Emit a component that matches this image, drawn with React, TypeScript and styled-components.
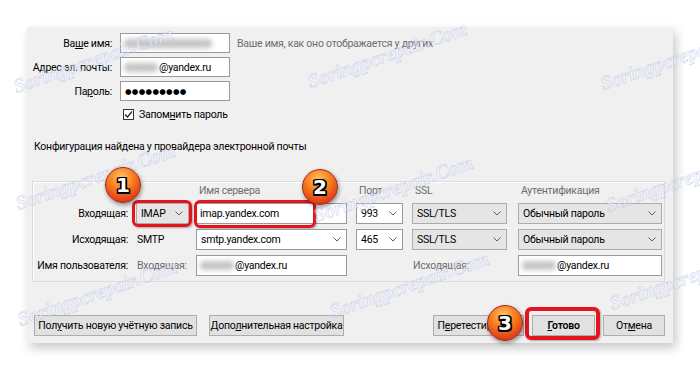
import styled, { createGlobalStyle } from 'styled-components'

const GlobalStyle = createGlobalStyle`
  html, body {
    margin: 0;
    padding: 0;
    background: #fff;
  }
  body {
    font-family: "Segoe UI", Roboto, "Noto Sans", sans-serif;
    font-size: 10.5px;
    letter-spacing: -0.25px;
    color: #000;
  }
  u {
    text-underline-offset: 1px;
  }
`

const Page = styled.div`
  position: relative;
  width: 700px;
  height: 371px;
  overflow: hidden;
  padding: 27px 27px 0 27px;
  box-sizing: border-box;
  background: #fff;
`

const Dialog = styled.div`
  width: 646px;
  height: 316px;
  background: #f0f0f0;
  box-shadow: 3px 5px 10px rgba(0, 0, 0, 0.22);
  padding: 6px 8px 7px 5px;
  box-sizing: border-box;
  display: flex;
  flex-direction: column;
`

const Identity = styled.div`
  display: grid;
  grid-template-columns: 80px 110px auto;
  grid-template-rows: 20px 20px 20px 16px;
  column-gap: 8px;
  row-gap: 4px;
  align-items: center;
`

const Label = styled.div`
  text-align: right;
  white-space: nowrap;
`

const Hint = styled.div`
  color: #6d6d6d;
  white-space: nowrap;
  margin-left: -1px;
`

const TextBox = styled.div<{ $w?: number }>`
  box-sizing: border-box;
  height: 100%;
  width: ${p => (p.$w ? `${p.$w}px` : '100%')};
  border: 1px solid #9a9a9a;
  background: #fff;
  display: flex;
  align-items: center;
  padding: 0 3px;
  white-space: nowrap;
  overflow: hidden;
`

const Blur = styled.span<{ $w: number }>`
  display: inline-block;
  width: ${p => p.$w}px;
  height: 9px;
  margin-right: 1px;
  border-radius: 4px;
  background: #c4c4c4;
  filter: blur(2.5px);
  flex-shrink: 0;
`

const Dots = styled.span`
  font-family: "DejaVu Sans", sans-serif;
  font-size: 7.5px;
  letter-spacing: 0.3px;
  padding-left: 1px;
`

const CheckRow = styled.label`
  grid-column: 2 / 4;
  display: flex;
  align-items: center;
  gap: 5px;
  margin-top: 3px;
  padding-left: 3px;
  white-space: nowrap;
`

const CheckBox = styled.span`
  width: 11px;
  height: 11px;
  box-sizing: border-box;
  border: 1px solid #333;
  background: #fff;
  display: flex;
  align-items: center;
  justify-content: center;
`

const ConfigTitle = styled.div`
  margin-top: 18px;
  padding-left: 2px;
  line-height: 16px;
`

const GroupBox = styled.div`
  margin-top: 26px;
  border: 1px solid #dcdcdc;
  box-shadow: inset 1px 1px 0 #fff;
  padding: 0 3px 5px 0;
  display: grid;
  grid-template-columns: 103px 60px 160px 56px 106px 144px;
  grid-template-rows: 16px 21px 21px 21px;
  row-gap: 5px;
  align-items: center;
`

const RowLabel = styled.div`
  text-align: right;
  padding-right: 8px;
  white-space: nowrap;
`

const ColHead = styled.div`
  color: #6d6d6d;
  align-self: end;
  line-height: 14px;
  padding-left: 3px;
  white-space: nowrap;
`

const Plain = styled.div<{ $muted?: boolean }>`
  color: ${p => (p.$muted ? '#6d6d6d' : '#000')};
  padding-left: 1px;
  white-space: nowrap;
`

const Combo = styled.div<{ $w: number; $flat?: boolean }>`
  position: relative;
  box-sizing: border-box;
  height: 100%;
  width: ${p => p.$w}px;
  border: 1px solid ${p => (p.$flat ? '#acacac' : '#9a9a9a')};
  background: ${p => (p.$flat ? '#e5e5e5' : '#fff')};
  display: flex;
  align-items: center;
  padding: 0 5px 0 4px;
  white-space: nowrap;
`

const ComboText = styled.span`
  flex: 1;
  overflow: hidden;
`

const Highlight = styled.div<{ $t: number; $r: number; $b: number; $l: number; $bw?: number }>`
  position: relative;
  height: 100%;
  &::after {
    content: '';
    position: absolute;
    top: ${p => p.$t}px;
    right: ${p => p.$r}px;
    bottom: ${p => p.$b}px;
    left: ${p => p.$l}px;
    border: ${p => p.$bw || 3}px solid #e3141c;
    border-radius: 6px;
    box-shadow: 1px 1px 2px rgba(0, 0, 0, 0.3);
    pointer-events: none;
  }
`

const ButtonBar = styled.div`
  margin-top: auto;
  display: flex;
  justify-content: space-between;
  padding-left: 2px;
`

const ButtonGroup = styled.div<{ $gap: number }>`
  display: flex;
  gap: ${p => p.$gap}px;
`

const Button = styled.button<{ $w: number; $strong?: boolean }>`
  width: ${p => p.$w}px;
  height: 21px;
  box-sizing: border-box;
  border: 1px solid #adadad;
  background: #e1e1e1;
  font-family: inherit;
  font-size: inherit;
  letter-spacing: inherit;
  font-weight: ${p => (p.$strong ? 600 : 400)};
  color: #000;
  padding: 0;
  white-space: nowrap;
  overflow: hidden;
`

const Badge = styled.div<{ $x: number; $y: number }>`
  position: absolute;
  left: ${p => p.$x - 18}px;
  top: ${p => p.$y - 18}px;
  width: 36px;
  height: 36px;
  box-sizing: border-box;
  border-radius: 50%;
  background: radial-gradient(circle at 45% 28%, #ffc46a 0%, #f7811f 38%, #e2431a 72%, #b9261a 100%);
  border: 1px solid #9e2a14;
  box-shadow: 1px 2px 4px rgba(0, 0, 0, 0.4);
  display: flex;
  align-items: center;
  justify-content: center;
  font: bold 20px "DejaVu Sans", sans-serif;
  letter-spacing: 0;
  color: #fff;
  text-shadow:
    -1.5px -1.5px 0 #000, 1.5px -1.5px 0 #000, -1.5px 1.5px 0 #000, 1.5px 1.5px 0 #000,
    0 -1.5px 0 #000, 0 1.5px 0 #000, -1.5px 0 0 #000, 1.5px 0 0 #000;
`

const Watermark = styled.div<{ $x: number; $y: number }>`
  position: absolute;
  left: ${p => p.$x}px;
  top: ${p => p.$y - 22}px;
  line-height: 22px;
  transform: rotate(-19deg);
  transform-origin: left bottom;
  font: italic bold 20px "Liberation Serif", serif;
  letter-spacing: 0;
  color: rgba(240, 242, 252, 0.5);
  -webkit-text-stroke: 0.6px rgba(150, 165, 220, 0.4);
  white-space: nowrap;
  pointer-events: none;
`

const Chevron = () => (
  <svg width="8" height="5" viewBox="0 0 8 5">
    <path d="M0.5 0.5 L4 4 L7.5 0.5" fill="none" stroke="#5f5f5f" strokeWidth="1" />
  </svg>
)

const Check = () => (
  <svg width="9" height="9" viewBox="0 0 9 9">
    <path d="M1 4.5 L3.5 7 L8 1.5" fill="none" stroke="#222" strokeWidth="1.2" />
  </svg>
)

const marks = [
  [18, 97], [312, 92], [605, 94],
  [20, 214], [318, 226], [610, 216],
  [22, 330], [334, 322], [614, 314],
]

export default function App() {
  return (
    <>
      <GlobalStyle />
      <Page>
        <Dialog>
          <Identity>
            <Label>Ва<u>ш</u>е имя:</Label>
            <TextBox><Blur $w={88} /></TextBox>
            <Hint>Ваше имя, как оно отображается у других</Hint>

            <Label>Адрес эл. почты:</Label>
            <TextBox><Blur $w={34} />@yandex.ru</TextBox>
            <span />

            <Label>Па<u>р</u>оль:</Label>
            <TextBox><Dots>●●●●●●●●●</Dots></TextBox>
            <span />

            <span />
            <CheckRow>
              <CheckBox><Check /></CheckBox>
              <span>Запом<u>н</u>ить пароль</span>
            </CheckRow>
          </Identity>

          <ConfigTitle>Конфигурация найдена у провайдера электронной почты</ConfigTitle>

          <GroupBox>
            <span />
            <span />
            <ColHead>Имя сервера</ColHead>
            <ColHead>Порт</ColHead>
            <ColHead>SSL</ColHead>
            <ColHead>Аутентификация</ColHead>

            <RowLabel>Входящая:</RowLabel>
            <Highlight $t={-3} $r={4} $b={-3} $l={-4}>
              <Combo $w={53} $flat>
                <ComboText>IMAP</ComboText>
                <Chevron />
              </Combo>
            </Highlight>
            <Highlight $t={-3} $r={40} $b={-4} $l={-2}>
              <TextBox $w={151}>imap.yandex.com</TextBox>
            </Highlight>
            <Combo $w={47}>
              <ComboText>993</ComboText>
              <Chevron />
            </Combo>
            <Combo $w={95} $flat>
              <ComboText>SSL/TLS</ComboText>
              <Chevron />
            </Combo>
            <Combo $w={144} $flat>
              <ComboText>Обычный пароль</ComboText>
              <Chevron />
            </Combo>

            <RowLabel>Исходящая:</RowLabel>
            <Plain>SMTP</Plain>
            <Combo $w={151}>
              <ComboText>smtp.yandex.com</ComboText>
              <Chevron />
            </Combo>
            <Combo $w={47}>
              <ComboText>465</ComboText>
              <Chevron />
            </Combo>
            <Combo $w={95} $flat>
              <ComboText>SSL/TLS</ComboText>
              <Chevron />
            </Combo>
            <Combo $w={144} $flat>
              <ComboText>Обычный пароль</ComboText>
              <Chevron />
            </Combo>

            <RowLabel>Имя пользователя:</RowLabel>
            <Plain $muted>Входящая:</Plain>
            <TextBox $w={151}><Blur $w={34} />@yandex.ru</TextBox>
            <span />
            <Plain $muted>Исходящая:</Plain>
            <TextBox $w={144}><Blur $w={34} />@yandex.ru</TextBox>
          </GroupBox>

          <ButtonBar>
            <ButtonGroup $gap={12}>
              <Button $w={163}>Пол<u>у</u>чить новую учётную запись</Button>
              <Button $w={135}>Допо<u>л</u>нительная настройка</Button>
            </ButtonGroup>
            <ButtonGroup $gap={8}>
              <Button $w={91}>П<u>е</u>ретестировать</Button>
              <Highlight $t={-8} $r={-5} $b={-4} $l={-7} $bw={4}>
                <Button $w={63} $strong><u>Г</u>отово</Button>
              </Highlight>
              <Button $w={62}>От<u>м</u>ена</Button>
            </ButtonGroup>
          </ButtonBar>
        </Dialog>

        {marks.map(([x, y], i) => (
          <Watermark key={i} $x={x} $y={y}>Soringpcrepair.Com</Watermark>
        ))}

        <Badge $x={123} $y={185}>1</Badge>
        <Badge $x={320} $y={187}>2</Badge>
        <Badge $x={505} $y={323}>3</Badge>
      </Page>
    </>
  )
}
